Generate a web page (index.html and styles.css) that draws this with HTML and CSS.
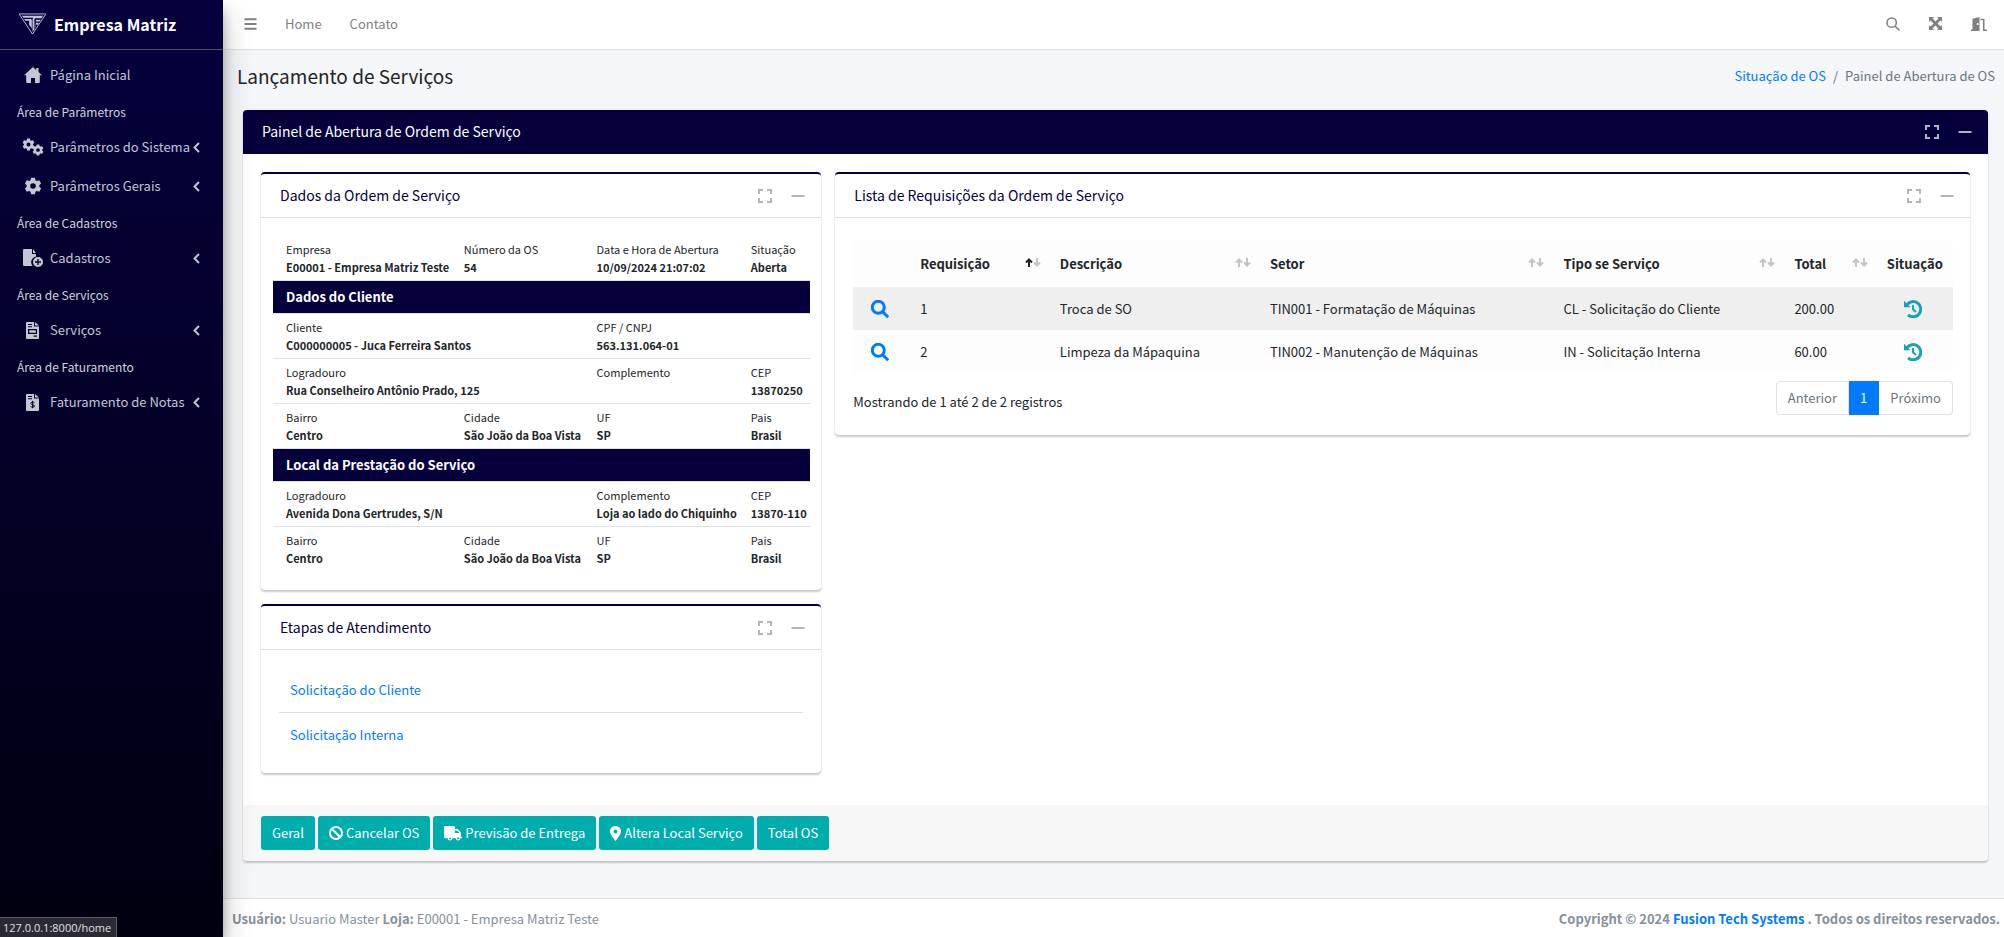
FILE: index.html
```html
<!DOCTYPE html>
<html lang="pt-br">
<head>
  <meta charset="UTF-8" />
  <meta name="viewport" content="width=device-width, initial-scale=1.0"/>
  <title>Painel de Abertura de OS</title>
  <link rel="stylesheet" href="styles.css">
</head>
<body>
  <!-- Icon sprite -->
  <svg class="sprite" aria-hidden="true">
    <symbol id="i-home" viewBox="0 0 18 16"><path d="M9 0 0 8.2h2.200V15a1 1 0 0 0 1 1H7v-5h4v5h3.800a1 1 0 0 0 1-1V8.200H18L14.500 5V1h-2.300v2z"/></symbol>
    <symbol id="i-gear" viewBox="0 0 24 24"><path fill-rule="evenodd" d="M9.500 1h5l.8 3.200 1.800 1 3.200-.9 2.500 4.300-2.400 2.300v2.200l2.400 2.300-2.500 4.300-3.200-.9-1.800 1-.8 3.200h-5l-.8-3.200-1.800-1-3.200.9-2.500-4.300 2.400-2.300v-2.200L1.200 8.600l2.500-4.300 3.200.9 1.800-1zM12 8.300a3.700 3.700 0 1 0 0 7.400 3.700 3.700 0 0 0 0-7.400z"/></symbol>
    <symbol id="i-file-plus" viewBox="0 0 20 18"><path d="M1 0h8v5h4v2.500a5.800 5.800 0 0 0-3.400 9.500H1a1 1 0 0 1-1-1V1a1 1 0 0 1 1-1zm9 0 3 4h-3z"/><path fill-rule="evenodd" d="M15 8a5 5 0 1 1 0 10 5 5 0 0 1 0-10zm-.7 2v2.300H12v1.400h2.300V16h1.400v-2.300H18v-1.400h-2.300V10z"/></symbol>
    <symbol id="i-invoice" viewBox="0 0 13 17"><path fill-rule="evenodd" d="M1 0h7v4.500h5V16a1 1 0 0 1-1 1H1a1 1 0 0 1-1-1V1a1 1 0 0 1 1-1zm8 0 4 3.600H9zM2 2v1h4V2zm0 2.200v1h4v-1zM2 7v5h9V7zm1.200 1.200h6.600v2.600H3.200zM7.500 13.500v1.200H11v-1.200z"/></symbol>
    <symbol id="i-invoice-dollar" viewBox="0 0 13 17"><path fill-rule="evenodd" d="M1 0h7v4.500h5V16a1 1 0 0 1-1 1H1a1 1 0 0 1-1-1V1a1 1 0 0 1 1-1zm8 0 4 3.600H9zM2 2v1h4V2zm0 2.200v1h4v-1z"/><path class="cut" d="M8.500 8.700C7.800 8 4.800 7.800 4.800 9.300c0 1.700 3.700 1 3.700 2.700 0 1.500-3 1.500-4 .5M6.600 6.800v7.400"/></symbol>
    <symbol id="i-chevron" viewBox="0 0 7 11"><path class="line" d="M6 1 1.500 5.500 6 10"/></symbol>
    <symbol id="i-bars" viewBox="0 0 13 12"><path class="line" d="M.5 1.200h12M.5 6h12M.5 10.800h12"/></symbol>
    <symbol id="i-search" viewBox="0 0 18 18"><circle class="line" cx="7.300" cy="7.300" r="6"/><path class="line" d="m11.600 11.600 5.600 5.600"/></symbol>
    <symbol id="i-arrows" viewBox="0 0 13 13"><path d="M0 0h5L3.600 1.600 6.500 4.500l2.900-2.900L8 0h5v5l-1.600-1.400-2.900 2.900 2.900 2.900L13 8v5H8l1.400-1.600-2.900-2.900-2.900 2.900L5 13H0V8l1.600 1.400 2.900-2.900-2.900-2.900L0 5z"/></symbol>
    <symbol id="i-door" viewBox="0 0 16 14"><path fill-rule="evenodd" d="M8.500 0v14H0v-1.500h1.500V1.800zM6.700 6a1 1 0 1 0 0 2 1 1 0 0 0 0-2z"/><path d="M9.500 1.800h4V12.500H16V14h-4V3.300H9.500z"/></symbol>
    <symbol id="i-expand" viewBox="0 0 14 14"><path class="line" d="M1 5V1h4M9 1h4v4M13 9v4H9M5 13H1V9"/></symbol>
    <symbol id="i-minus" viewBox="0 0 14 14"><path class="line" d="M.5 7h13"/></symbol>
    <symbol id="i-history" viewBox="0 0 18 18"><path class="line" d="M2.800 5A7.600 7.600 0 1 1 4.100 14.900"/><path d="M0 .8v6.400h6.400z"/><path class="thin" d="M9 5v4.300l3 2.600"/></symbol>
    <symbol id="i-ban" viewBox="0 0 14 14"><circle class="line" cx="7" cy="7" r="6"/><path class="line" d="m2.800 2.800 8.400 8.400"/></symbol>
    <symbol id="i-truck" viewBox="0 0 18 15"><path fill-rule="evenodd" d="M1 0h9a1 1 0 0 1 1 1v2h2.500L17 6.500V11h1v1.300h-1.700a2.300 2.300 0 0 1-4.600 0H8.300a2.300 2.300 0 0 1-4.600 0H1a1 1 0 0 1-1-1V1a1 1 0 0 1 1-1zm10 4.500V7h4.500L13 4.500z"/><circle class="hole" cx="6" cy="12.500" r="1"/><circle class="hole" cx="14" cy="12.500" r="1"/></symbol>
    <symbol id="i-pin" viewBox="0 0 11 15"><path fill-rule="evenodd" d="M5.500 0A5.500 5.500 0 0 1 11 5.500C11 8 7.500 12.500 5.500 15 3.500 12.500 0 8 0 5.500A5.500 5.500 0 0 1 5.500 0zm0 3.600a1.900 1.900 0 1 0 0 3.800 1.900 1.900 0 0 0 0-3.800z"/></symbol>
    <symbol id="i-up" viewBox="0 0 8 9"><path class="line" d="M4 9V1.500M1 4.500l3-3 3 3"/></symbol>
    <symbol id="i-down" viewBox="0 0 8 9"><path class="line" d="M4 0v7.500M1 4.500l3 3 3-3"/></symbol>
  </svg>

  <div class="wrapper">
    <aside class="sidebar">
      <a href="#" class="brand">
        <svg class="brand-logo" viewBox="0 0 30 23" aria-hidden="true">
          <path class="edge" d="M1 1h28L15 22z"/>
          <path d="M4 3h22l-1.500 2.500H18L17 6.500V17l-2 2.500V6.500l1-1.500H5.500z"/>
          <path d="M6 6.200h7.500l.8 1V16L11.500 12.500V8.200H7.500zM18.500 7h5.200l-1.200 2h-4zM18.500 10.200h3.300l-1.200 2h-2.100v2L17.800 16z"/>
        </svg>
        <span>Empresa Matriz</span>
      </a>
      <nav class="side-nav">
        <a href="#" class="nav-item"><span class="nav-icon"><svg class="ico-home"><use href="#i-home"/></svg></span>Página Inicial</a>
        <div class="nav-header">Área de Parâmetros</div>
        <a href="#" class="nav-item"><span class="nav-icon"><svg class="ico-cogs" viewBox="0 0 22 18"><use href="#i-gear" width="13" height="13"/><use href="#i-gear" x="10" y="6" width="12" height="12"/></svg></span>Parâmetros do Sistema<svg class="chevron"><use href="#i-chevron"/></svg></a>
        <a href="#" class="nav-item"><span class="nav-icon"><svg class="ico-gear"><use href="#i-gear"/></svg></span>Parâmetros Gerais<svg class="chevron"><use href="#i-chevron"/></svg></a>
        <div class="nav-header">Área de Cadastros</div>
        <a href="#" class="nav-item"><span class="nav-icon"><svg class="ico-plus"><use href="#i-file-plus"/></svg></span>Cadastros<svg class="chevron"><use href="#i-chevron"/></svg></a>
        <div class="nav-header">Área de Serviços</div>
        <a href="#" class="nav-item"><span class="nav-icon"><svg class="ico-file"><use href="#i-invoice"/></svg></span>Serviços<svg class="chevron"><use href="#i-chevron"/></svg></a>
        <div class="nav-header">Área de Faturamento</div>
        <a href="#" class="nav-item"><span class="nav-icon"><svg class="ico-file"><use href="#i-invoice-dollar"/></svg></span>Faturamento de Notas<svg class="chevron"><use href="#i-chevron"/></svg></a>
      </nav>
    </aside>

    <div class="main">
      <header class="topbar">
        <button type="button" class="icon-btn" aria-label="Menu"><svg class="ico-bars"><use href="#i-bars"/></svg></button>
        <a href="#">Home</a>
        <a href="#">Contato</a>
        <div class="topbar-right">
          <button type="button" class="icon-btn" aria-label="Pesquisar"><svg class="ico-search"><use href="#i-search"/></svg></button>
          <button type="button" class="icon-btn" aria-label="Tela cheia"><svg class="ico-arrows"><use href="#i-arrows"/></svg></button>
          <button type="button" class="icon-btn" aria-label="Sair"><svg class="ico-door"><use href="#i-door"/></svg></button>
        </div>
      </header>

      <div class="content-header">
        <h1>Lançamento de Serviços</h1>
        <nav class="breadcrumb"><a href="#">Situação de OS</a><span class="sep">/</span><span>Painel de Abertura de OS</span></nav>
      </div>

      <main class="content">
        <section class="card panel">
          <div class="card-header">
            <h2>Painel de Abertura de Ordem de Serviço</h2>
            <div class="card-tools">
              <button type="button" class="icon-btn" aria-label="Expandir"><svg><use href="#i-expand"/></svg></button>
              <button type="button" class="icon-btn" aria-label="Recolher"><svg><use href="#i-minus"/></svg></button>
            </div>
          </div>
          <div class="panel-body">
            <div class="col-4">
              <section class="card card-outline">
                <div class="card-header">
                  <h2>Dados da Ordem de Serviço</h2>
                  <div class="card-tools">
                    <button type="button" class="icon-btn" aria-label="Expandir"><svg><use href="#i-expand"/></svg></button>
                    <button type="button" class="icon-btn" aria-label="Recolher"><svg><use href="#i-minus"/></svg></button>
                  </div>
                </div>
                <div class="os-body">
                  <table class="os-table">
                    <colgroup><col class="c1"><col class="c2"><col class="c3"><col class="c4"></colgroup>
                    <tbody>
                      <tr><td>Empresa<b>E00001 - Empresa Matriz Teste</b></td><td>Número da OS<b>54</b></td><td>Data e Hora de Abertura<b>10/09/2024 21:07:02</b></td><td>Situação<b>Aberta</b></td></tr>
                      <tr><th colspan="4">Dados do Cliente</th></tr>
                      <tr><td colspan="2">Cliente<b>C000000005 - Juca Ferreira Santos</b></td><td colspan="2">CPF / CNPJ<b>563.131.064-01</b></td></tr>
                      <tr><td colspan="2">Logradouro<b>Rua Conselheiro Antônio Prado, 125</b></td><td>Complemento</td><td>CEP<b>13870250</b></td></tr>
                      <tr><td>Bairro<b>Centro</b></td><td>Cidade<b>São João da Boa Vista</b></td><td>UF<b>SP</b></td><td>Pais<b>Brasil</b></td></tr>
                      <tr><th colspan="4">Local da Prestação do Serviço</th></tr>
                      <tr><td colspan="2">Logradouro<b>Avenida Dona Gertrudes, S/N</b></td><td>Complemento<b>Loja ao lado do Chiquinho</b></td><td>CEP<b>13870-110</b></td></tr>
                      <tr><td>Bairro<b>Centro</b></td><td>Cidade<b>São João da Boa Vista</b></td><td>UF<b>SP</b></td><td>Pais<b>Brasil</b></td></tr>
                    </tbody>
                  </table>
                </div>
              </section>

              <section class="card card-outline">
                <div class="card-header">
                  <h2>Etapas de Atendimento</h2>
                  <div class="card-tools">
                    <button type="button" class="icon-btn" aria-label="Expandir"><svg><use href="#i-expand"/></svg></button>
                    <button type="button" class="icon-btn" aria-label="Recolher"><svg><use href="#i-minus"/></svg></button>
                  </div>
                </div>
                <ul class="steps">
                  <li><a href="#">Solicitação do Cliente</a></li>
                  <li><a href="#">Solicitação Interna</a></li>
                </ul>
              </section>
            </div>

            <div class="col-8">
              <section class="card card-outline">
                <div class="card-header">
                  <h2>Lista de Requisições da Ordem de Serviço</h2>
                  <div class="card-tools">
                    <button type="button" class="icon-btn" aria-label="Expandir"><svg><use href="#i-expand"/></svg></button>
                    <button type="button" class="icon-btn" aria-label="Recolher"><svg><use href="#i-minus"/></svg></button>
                  </div>
                </div>
                <div class="list-body">
                  <table class="req-table">
                    <colgroup><col class="r1"><col class="r2"><col class="r3"><col class="r4"><col class="r5"><col class="r6"><col class="r7"></colgroup>
                    <thead>
                      <tr>
                        <th></th>
                        <th><div class="sort asc">Requisição<span><svg><use href="#i-up"/></svg><svg><use href="#i-down"/></svg></span></div></th>
                        <th><div class="sort">Descrição<span><svg><use href="#i-up"/></svg><svg><use href="#i-down"/></svg></span></div></th>
                        <th><div class="sort">Setor<span><svg><use href="#i-up"/></svg><svg><use href="#i-down"/></svg></span></div></th>
                        <th><div class="sort">Tipo se Serviço<span><svg><use href="#i-up"/></svg><svg><use href="#i-down"/></svg></span></div></th>
                        <th><div class="sort">Total<span><svg><use href="#i-up"/></svg><svg><use href="#i-down"/></svg></span></div></th>
                        <th>Situação</th>
                      </tr>
                    </thead>
                    <tbody>
                      <tr>
                        <td class="center"><a href="#" aria-label="Ver requisição 1"><svg class="row-icon view"><use href="#i-search"/></svg></a></td>
                        <td>1</td><td>Troca de SO</td><td>TIN001 - Formatação de Máquinas</td><td>CL - Solicitação do Cliente</td><td>200.00</td>
                        <td class="center"><a href="#" aria-label="Histórico da requisição 1"><svg class="row-icon history"><use href="#i-history"/></svg></a></td>
                      </tr>
                      <tr>
                        <td class="center"><a href="#" aria-label="Ver requisição 2"><svg class="row-icon view"><use href="#i-search"/></svg></a></td>
                        <td>2</td><td>Limpeza da Mápaquina</td><td>TIN002 - Manutenção de Máquinas</td><td>IN - Solicitação Interna</td><td>60.00</td>
                        <td class="center"><a href="#" aria-label="Histórico da requisição 2"><svg class="row-icon history"><use href="#i-history"/></svg></a></td>
                      </tr>
                    </tbody>
                  </table>
                  <div class="list-footer">
                    <div class="list-info">Mostrando de 1 até 2 de 2 registros</div>
                    <div class="pagination"><a href="#">Anterior</a><a href="#" class="active">1</a><a href="#">Próximo</a></div>
                  </div>
                </div>
              </section>
            </div>
          </div>
          <div class="card-footer">
            <button type="button" class="btn">Geral</button>
            <button type="button" class="btn"><svg class="ico-ban"><use href="#i-ban"/></svg>Cancelar OS</button>
            <button type="button" class="btn"><svg class="ico-truck"><use href="#i-truck"/></svg>Previsão de Entrega</button>
            <button type="button" class="btn"><svg class="ico-pin"><use href="#i-pin"/></svg>Altera Local Serviço</button>
            <button type="button" class="btn">Total OS</button>
          </div>
        </section>
      </main>

      <footer class="footer">
        <div><b>Usuário:</b> Usuario Master <b>Loja:</b> E00001 - Empresa Matriz Teste</div>
        <div><b>Copyright © 2024 <a href="#">Fusion Tech Systems</a> . Todos os direitos reservados.</b></div>
      </footer>
    </div>
  </div>

  <div class="status">127.0.0.1:8000/home</div>
</body>
</html>
```
FILE: styles.css
```css
* { box-sizing: border-box; }

body {
  margin: 0;
  font-family: "Noto Sans CJK JP", "Noto Sans CJK SC", sans-serif;
  font-size: 13px;
  line-height: 22px;
  color: #212529;
  background-color: #f4f6f9;
}

a { color: #007bff; text-decoration: none; }
h1, h2 { margin: 0; font-weight: 400; }
svg { fill: currentColor; display: block; flex: none; }
.sprite { position: absolute; width: 0; height: 0; }
.line { fill: none; stroke: currentColor; stroke-width: var(--stroke, 2); }
.thin { fill: none; stroke: currentColor; stroke-width: 2; }
.cut { fill: none; stroke: #03002c; stroke-width: 1; }
.hole { fill: #00adad; }

.icon-btn {
  border: 0;
  padding: 0;
  background: none;
  color: inherit;
  cursor: pointer;
}

.wrapper { display: flex; min-height: 100vh; }

/* Sidebar */
.sidebar {
  width: 223px;
  flex: none;
  position: relative;
  z-index: 10;
  background: linear-gradient(#05013d, #00000f);
  box-shadow: 0 14px 28px rgba(0, 0, 0, .25), 0 10px 10px rgba(0, 0, 0, .22);
}

.brand {
  display: flex;
  align-items: center;
  gap: 7px;
  height: 50px;
  padding: 0 18px 2px;
  border-bottom: 1px solid #4b545c;
  color: #fff;
  font-size: 16px;
  font-weight: 700;
}

.brand-logo { width: 29px; height: 22px; color: #c4c2d3; }
.edge { fill: none; stroke: currentColor; stroke-width: 1; }

.side-nav { padding: 7px 7px 0; }

.nav-item {
  display: flex;
  align-items: center;
  height: 36px;
  margin-bottom: 3px;
  padding-left: 10px;
  padding-right: 16px;
  color: #c2c7d0;
}

.nav-icon { display: flex; justify-content: center; width: 31px; margin-right: 2px; }
.nav-item > .chevron { margin-left: auto; }
.nav-header { height: 33px; padding: 5px 10px; font-size: 12px; line-height: 22px; color: #d0d4db; }

.chevron { width: 7px; height: 11px; }
.ico-home { width: 18px; height: 16px; }
.ico-cogs { width: 22px; height: 18px; }
.ico-gear { width: 18px; height: 18px; }
.ico-plus { width: 20px; height: 18px; }
.ico-file { width: 13px; height: 17px; }
.ico-bars { width: 13px; height: 12px; }
.ico-search { width: 14px; height: 14px; }
.ico-arrows { width: 13px; height: 13px; }
.ico-door { width: 16px; height: 14px; }

/* Main area */
.main { flex: 1; min-width: 0; display: flex; flex-direction: column; }

.topbar {
  display: flex;
  align-items: center;
  gap: 28px;
  height: 50px;
  padding: 0 17px 2px 21px;
  background: #fff;
  border-bottom: 1px solid #dee2e6;
  color: #808080;
}

.topbar a { color: #808080; }
.topbar-right { display: flex; align-items: center; gap: 29px; margin-left: auto; }

.content-header {
  display: flex;
  align-items: center;
  justify-content: space-between;
  height: 54px;
  padding: 0 9px 2px 14px;
}

.content-header h1 { font-size: 19px; line-height: 28px; }
.breadcrumb { color: #6c757d; }
.sep { padding: 0 7px; }
.content { flex: 1; padding: 6px 16px 37px 20px; }

/* Cards */
.card {
  background: #fff;
  border-radius: 4px;
  box-shadow: 0 0 1px rgba(0, 0, 0, .2), 0 2px 2px rgba(0, 0, 0, .2);
}

.card-header {
  display: flex;
  align-items: center;
  justify-content: space-between;
  height: 44px;
  padding: 0 16px 0 19px;
}

.card-header h2 { font-size: 14px; padding-bottom: 2px; }
.card-tools { display: flex; gap: 19px; color: #adb5bd; }
.card-tools svg { width: 14px; height: 14px; }
.panel > .card-header { background: #05003c; color: #fff; border-radius: 4px 4px 0 0; }

.panel-body { display: flex; padding: 18px 11px; }
.col-4, .col-8 { padding: 0 7px; }
.col-4 { width: 33.333%; }
.col-8 { width: 66.667%; }

.card-outline { border-top: 2px solid #05003c; margin-bottom: 14px; }
.card-outline > .card-header { color: #05003c; border-bottom: 1px solid #dfdfdf; }

.os-body { padding: 18px 11px 19px 12px; }
.os-table { width: 100%; table-layout: fixed; border-collapse: collapse; font-size: 11px; line-height: 18px; white-space: nowrap; }
.os-table td { padding: 4px 0 4px 13px; border-bottom: 1px solid #dee2e6; vertical-align: top; }
.os-table tr:last-child td { border-bottom: 0; }
.os-table b { display: block; }
.os-table th { padding: 5px 13px; background: #05003c; color: #fff; font-size: 13px; line-height: 22px; text-align: left; border-bottom: 1px solid #dee2e6; }
.c1 { width: 33.1%; }
.c2 { width: 24.7%; }
.c3 { width: 28.7%; }
.c4 { width: 13.5%; }

.steps { list-style: none; margin: 0; padding: 18px 18px 16px; }
.steps li { padding: 11px; }
.steps li + li { border-top: 1px solid #dfdfdf; }

/* Requisition list */
.list-body { padding: 23px 17px 20px 18px; }
.req-table { width: 100%; table-layout: fixed; border-collapse: collapse; white-space: nowrap; }
.req-table th { height: 46px; padding: 0 6px 0 13px; text-align: left; background: #fdfdfd; }
.req-table td { height: 43px; padding: 0 13px; background: #fdfdfd; }
.req-table tbody tr:nth-child(odd) td { background: #efefef; }
.req-table .center { padding: 0; }
.r1 { width: 4.9%; }
.r2 { width: 12.7%; }
.r3 { width: 19.1%; }
.r4 { width: 26.7%; }
.r5 { width: 21%; }
.r6 { width: 8.4%; }
.r7 { width: 7.2%; }

.sort { display: flex; align-items: center; justify-content: space-between; }
.sort span { display: flex; color: #c4c5c6; padding-bottom: 4px; }
.sort svg { width: 8px; height: 9px; }
.sort.asc svg:first-child { color: #212529; }

.row-icon { --stroke: 3; width: 18px; height: 18px; margin: 0 auto; }
.view { color: #007bff; }
.history { color: #17a2b8; }

.list-footer { display: flex; justify-content: space-between; align-items: flex-start; padding-top: 8px; }
.list-info { padding-top: 10px; }
.pagination { display: flex; }
.pagination a { padding: 5px 11px; border: 1px solid #dee2e6; border-left-width: 0; color: #6c757d; }
.pagination a:first-child { border-left-width: 1px; border-radius: 4px 0 0 4px; }
.pagination a:last-child { border-radius: 0 4px 4px 0; }
.pagination .active { background: #007bff; border-color: #007bff; color: #fff; }

.card-footer { display: flex; gap: 3px; padding: 11px 18px; background: #f7f7f7; border-radius: 0 0 4px 4px; }

.btn {
  display: flex;
  align-items: center;
  gap: 3px;
  height: 34px;
  padding: 0 11px;
  border: 0;
  border-radius: 3px;
  background-color: #00adad;
  color: #fff;
  font: inherit;
  cursor: pointer;
}

.ico-ban { width: 14px; height: 14px; }
.ico-truck { width: 18px; height: 15px; }
.ico-pin { width: 11px; height: 15px; }

/* Footer */
.footer {
  display: flex;
  justify-content: space-between;
  align-items: center;
  height: 39px;
  padding: 2px 4px 0 9px;
  background: #fff;
  border-top: 1px solid #dee2e6;
  color: #869099;
}

.status {
  position: fixed;
  left: 0;
  bottom: 0;
  z-index: 20;
  padding: 0 5px 0 3px;
  border: solid #5b5b66;
  border-width: 1px 1px 0 0;
  background: #2b2a33;
  color: #e0e0e4;
  font: 11px/19px "Open Sans", sans-serif;
}
```
